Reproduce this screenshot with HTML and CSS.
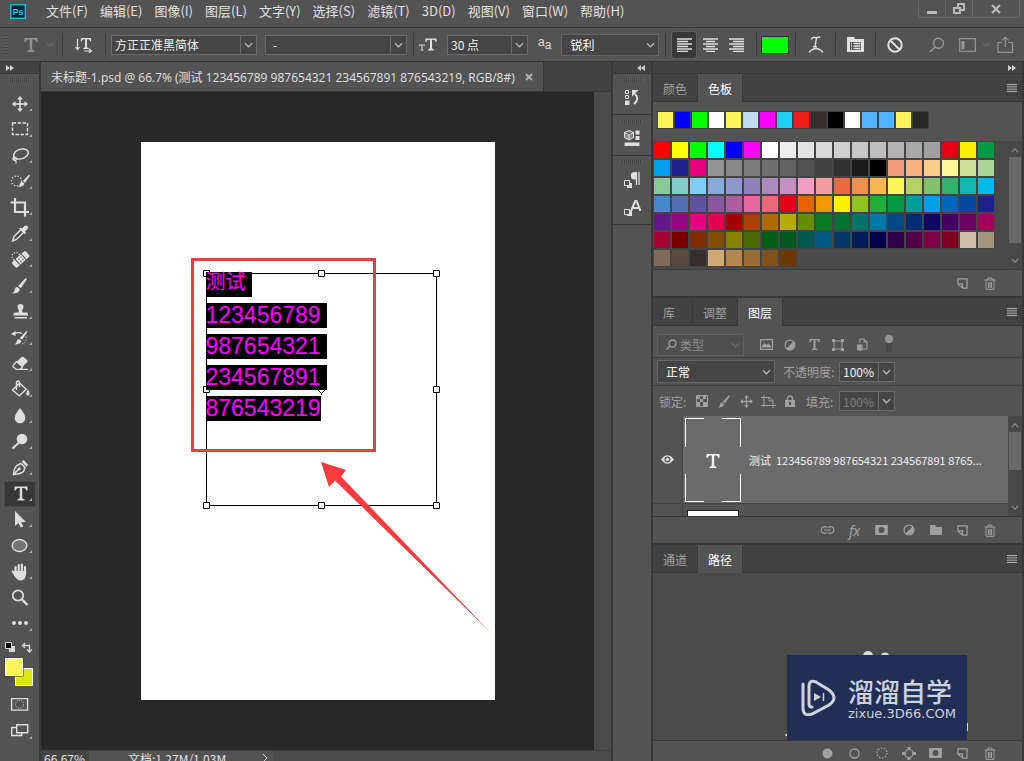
FILE: index.html
```html
<!DOCTYPE html>
<html lang="zh-CN">
<head>
<meta charset="utf-8">
<title>未标题-1.psd</title>
<link rel="stylesheet" href="styles.css">
</head>
<body>
<svg class="sprite" aria-hidden="true">
  <symbol id="chev" viewBox="0 0 10 6"><path d="M1 1l4 4 4-4" fill="none" stroke="currentColor" stroke-width="1.4"/></symbol>
  <symbol id="corner" viewBox="0 0 4 4"><path d="M4 0v4H0z" fill="#a8a8a8"/></symbol>
  <symbol id="new" viewBox="0 0 12 12"><path d="M1 6V1h10v10H6V6.500H1zM1 6.500L6 11" fill="none" stroke="currentColor" stroke-width="1.300"/></symbol>
  <symbol id="trash" viewBox="0 0 12 13"><path d="M.5 3h11M4 3V1h4v2M2 3v9.300h8V3M4.500 5v6M6 5v6M7.500 5v6" fill="none" stroke="currentColor"/></symbol>
  <symbol id="mask" viewBox="0 0 14 11"><path fill-rule="evenodd" d="M0 0h14v11H0zM7 2.300a3.200 3.200 0 100 6.400 3.200 3.200 0 000-6.400z" fill="currentColor"/></symbol>
  <symbol id="half" viewBox="0 0 12 12"><circle cx="6" cy="6" r="4.900" fill="none" stroke="currentColor" stroke-width="1.200"/><path d="M9.500 2.500a5 5 0 01-7 7z" fill="currentColor"/></symbol>
  <symbol id="menu" viewBox="0 0 10 8"><path d="M0 .5h10M0 2.800h10M0 5.200h10M0 7.500h10" stroke="currentColor"/></symbol>
  <symbol id="T" viewBox="0 0 14 14"><path d="M.5 0h13v4H12.300Q12 1.500 10 1.500H8.200V11Q8.200 12.500 10.500 12.700V14h-7v-1.300Q5.800 12.500 5.800 11V1.500H4Q2 1.500 1.700 4H.5z" fill="currentColor"/></symbol>
  <symbol id="move" viewBox="0 0 16 16"><path d="M8 2v12M2 8h12" stroke="currentColor" stroke-width="1.600"/><path d="M8 0l3 3.500H5zM8 16l3-3.500H5zM0 8l3.500-3v6zM16 8l-3.500-3v6z" fill="currentColor"/></symbol>
  <symbol id="brush" viewBox="0 0 14 15"><path d="M13.700.3Q14 1 13.300 2L8.200 9.500 5.800 7.600 12 .8Q13-.2 13.700.3zM5 8.500l2.400 2Q7 14.500 0 14.500 2.500 13 2.600 10.500 3 8.500 5 8.500z" fill="currentColor"/></symbol>
</svg>
<div class="app">
  <header class="menubar">
    <svg class="logo" viewBox="0 0 16 15" role="img" aria-label="Ps"><rect x=".7" y=".7" width="14.600" height="13.600" fill="#032334" stroke="#25b9dc" stroke-width="1.400"/><text x="8" y="11" class="logo-text">Ps</text></svg>
    <nav class="menus">
      <button>文件(F)</button><button>编辑(E)</button><button>图像(I)</button><button>图层(L)</button><button>文字(Y)</button><button>选择(S)</button><button>滤镜(T)</button><button>3D(D)</button><button>视图(V)</button><button>窗口(W)</button><button>帮助(H)</button>
    </nav>
    <div class="window-controls">
      <button aria-label="最小化"><svg width="12" height="12"><path d="M1 9.500h10" stroke="currentColor" stroke-width="3"/></svg></button>
      <button aria-label="还原"><svg width="12" height="12"><path d="M5 5V1h6v6H7M1 5h6v5H1z" fill="none" stroke="currentColor" stroke-width="2"/></svg></button>
      <button class="close" aria-label="关闭"><svg width="12" height="12"><path d="M2 2l8 8M10 2l-8 8" stroke="currentColor" stroke-width="2.200"/></svg></button>
    </div>
  </header>

  <div class="options">
    <div class="group tool-group"><span class="grip-v"></span><svg class="dim" width="14" height="14"><use href="#T"/></svg><svg class="faint" width="8" height="5"><use href="#chev"/></svg></div>
    <div class="group orient-group"><button aria-label="切换文本取向"><svg width="18" height="16"><path d="M2.500 2v10M.5 10l2 2.500 2-2.500M9 14h7M14 12l2.500 2-2.500 2" fill="none" stroke="currentColor" stroke-width="1.200"/><use href="#T" x="5" y="1" width="12" height="11"/></svg></button></div>
    <div class="group font-group">
      <div class="combo family"><input aria-label="字体" value="方正正准黑简体"><button aria-label="选择字体"><svg width="9" height="6"><use href="#chev"/></svg></button></div>
      <div class="combo style"><input aria-label="字体样式" value="-"><button aria-label="选择样式"><svg width="9" height="6"><use href="#chev"/></svg></button></div>
    </div>
    <div class="group size-group">
      <svg width="18" height="16"><use href="#T" x="6" y="1" width="12" height="13"/><use href="#T" x="0" y="7" width="6" height="7"/></svg>
      <div class="combo size"><input aria-label="字号" value="30 点"><button aria-label="选择字号"><svg width="9" height="6"><use href="#chev"/></svg></button></div>
      <span class="aa"><sup>a</sup>a</span>
      <div class="drop smooth"><select aria-label="消除锯齿"><option>锐利</option></select><svg width="9" height="6"><use href="#chev"/></svg></div>
    </div>
    <div class="group align-group">
      <button class="on" aria-label="左对齐"><svg width="15" height="14"><path d="M0 1h15M0 3.500h11M0 6h15M0 8.500h11M0 11h15M0 13.500h11" stroke="currentColor" stroke-width="1.400"/></svg></button>
      <button aria-label="居中对齐"><svg width="15" height="14"><path d="M0 1h15M3 3.500h9M0 6h15M3 8.500h9M0 11h15M3 13.500h9" stroke="currentColor" stroke-width="1.400"/></svg></button>
      <button aria-label="右对齐"><svg width="15" height="14"><path d="M0 1h15M4 3.500h11M0 6h15M4 8.500h11M0 11h15M4 13.500h11" stroke="currentColor" stroke-width="1.400"/></svg></button>
    </div>
    <div class="group color-group"><button class="text-color" aria-label="文本颜色"></button></div>
    <div class="group icon-group"><button aria-label="文字变形"><svg width="16" height="18"><path d="M3.500 3.500Q4 1 6 1.500t6-.5M8.500 2L7 10.500M5 10.800h4M1 16.500q7-8 14 0" fill="none" stroke="currentColor" stroke-width="1.400"/></svg></button></div>
    <div class="group icon-group"><button aria-label="字符面板"><svg width="17" height="17"><path fill-rule="evenodd" d="M0 1h7l1 2h9v13H0zM3 6v8h11V6z" fill="currentColor"/><path d="M4 7.500h1M6.500 7.500h7M4 10h1M6.500 10h7M4 12.500h1M6.500 12.500h7" stroke="currentColor" stroke-width="1.300"/></svg></button></div>
    <div class="tail">
      <button aria-label="取消"><svg width="16" height="16"><path d="M3 3l10 10M8 1.300a6.700 6.700 0 100 13.400A6.700 6.700 0 008 1.300z" fill="none" stroke="currentColor" stroke-width="2"/></svg></button>
      <button class="dim push" aria-label="搜索"><svg width="16" height="16"><circle cx="9.500" cy="6.300" r="5" fill="none" stroke="currentColor" stroke-width="1.500"/><path d="M6 10l-5 5" stroke="currentColor" stroke-width="1.700"/></svg></button>
      <button class="dim" aria-label="工作区"><svg width="17" height="14"><path d="M.7.7h15.600v12.600H.7z" fill="none" stroke="currentColor" stroke-width="1.300"/><path d="M2.500 3v8h3V3z" fill="currentColor"/></svg></button>
      <svg class="faint" width="8" height="5"><use href="#chev"/></svg>
      <button class="dim" aria-label="共享"><svg width="17" height="17"><path d="M5 6.500H1v9.800h14.500V6.500h-4M8.300 11V1M5 4.300L8.300 1l3.300 3.300" fill="none" stroke="currentColor" stroke-width="1.200"/></svg></button>
    </div>
  </div>

  <div class="workspace">
    <aside class="toolbar">
      <div class="strip"><svg width="8" height="6"><path d="M0 0l4 3-4 3zM4 0l4 3-4 3z" fill="#d0d0d0"/></svg></div>
      <div class="grip"></div>
      <div class="tools" id="tools">
        <button aria-label="移动"><svg><use href="#move" x="8" y="5" width="16" height="16"/></svg></button>
        <button aria-label="矩形选框"><svg><path d="M8.500 6h15v11.500h-15z" fill="none" stroke="currentColor" stroke-width="1.400" stroke-dasharray="3.500 1.500"/></svg></button>
        <button aria-label="套索"><svg><ellipse cx="17" cy="11" rx="7.500" ry="4.800" transform="rotate(-16 17 11)" fill="none" stroke="currentColor" stroke-width="1.500"/><path d="M10 14a1.800 1.800 0 102.500 1.500Q11 13.500 9.500 16q3 1 2.500 4.500" fill="none" stroke="currentColor" stroke-width="1.200"/></svg></button>
        <button aria-label="快速选择"><svg><circle cx="12.500" cy="12" r="5" fill="none" stroke="currentColor" stroke-width="1.300" stroke-dasharray="1.300 1.700"/><use href="#brush" x="14" y="5" width="12" height="14"/></svg></button>
        <button aria-label="裁剪"><svg><path d="M6.500 8.500h14.500v14M11 4v14h14" transform="translate(0 -1)" fill="none" stroke="currentColor" stroke-width="2.200"/></svg></button>
        <button aria-label="吸管"><svg><path d="M17 8.500l-7 7-1.500 4.500 4-1.500 7-7" fill="none" stroke="currentColor" stroke-width="1.400"/><path d="M15 7.500l1.700-1L18 7.500l2.500-2.500q2-1 3 0t0 3L21 10.500l1 1.300-1.500 1.500z" fill="currentColor"/></svg></button>
        <button aria-label="修复画笔"><svg><circle cx="12" cy="9.500" r="4" fill="none" stroke="currentColor" stroke-width="1.200" stroke-dasharray="1.200 1.500"/><g transform="rotate(-42 16.500 12.500)"><rect x="7.500" y="8.800" width="18.500" height="7.500" rx="2" fill="currentColor"/><path d="M12.700 8.500v8M20.700 8.500v8" stroke="#535353"/><path d="M15 11.300h1M18 11.300h1M15 14h1M18 14h1" stroke="#535353" stroke-width="1.400"/></g></svg></button>
        <button aria-label="画笔"><svg><use href="#brush" x="8" y="5" width="15" height="16"/></svg></button>
        <button aria-label="仿制图章"><svg><path d="M16.500 5a3 3 0 013 3q0 1.500-1.200 3v2.500h4.200q1.500 0 1.500 2v1H9.500v-1q0-2 1.500-2h3.700V11q-1.200-1.500-1.200-3a3 3 0 013-3zM10.500 18h12.500v1.600H10.500z" fill="currentColor"/></svg></button>
        <button aria-label="历史记录画笔"><svg><use href="#brush" x="10" y="6" width="14" height="14"/><path d="M10 8.300q6-1.600 8 .2" fill="none" stroke="currentColor" stroke-width="1.300"/><path d="M7 9l4.500-3v5z" fill="currentColor"/><path d="M22 11.500q1.500 6-4.500 7.500" fill="none" stroke="currentColor" stroke-dasharray="1.200 1.500"/></svg></button>
        <button aria-label="橡皮擦"><svg><path d="M9.300 14.200L17.500 6q1-.8 2 0l3.800 3.300q.8 1 0 1.800l-4.800 4.700-6-5.300z" fill="currentColor"/><path d="M12.500 10.500l6 5.300-2.300 2.600h-4L9.300 16q-.8-1 0-1.800zM12 18.400h12" fill="none" stroke="currentColor" stroke-width="1.300"/></svg></button>
        <button aria-label="油漆桶"><svg><path d="M8.500 13l7-7 6.700 6.300-7 6.500zM12.500 13V6q0-2 1.500-2t1.500 2v4" fill="none" stroke="currentColor" stroke-width="1.400"/><path d="M24 12.500q2.500 4 1 5.500t-2.300 0q-1.300-1.500 1.300-5.500z" fill="currentColor"/></svg></button>
        <button aria-label="模糊"><svg><path d="M16 5q5.300 6.500 5.300 10a5.300 5.300 0 01-10.600 0Q10.700 11.500 16 5z" fill="currentColor"/></svg></button>
        <button aria-label="减淡"><svg><circle cx="18" cy="10" r="5.300" fill="currentColor"/><path d="M14.500 14L8.500 19.500" stroke="currentColor" stroke-width="2.200"/></svg></button>
        <button aria-label="钢笔"><svg><path d="M9.500 19.500Q10 13 13 10.500l4-2 4 4-1.500 4Q17 19 9.500 19.500zM9.500 19.500l5-5" fill="none" stroke="currentColor" stroke-width="1.500"/><circle cx="15.200" cy="13.800" r="1.500" fill="currentColor"/><path d="M17.500 6.500l2-1.500 4.700 4.700-1.700 2z" fill="currentColor"/></svg></button>
        <button class="on" aria-label="横排文字"><svg><use href="#T" x="10" y="5" width="14" height="15"/></svg></button>
        <button aria-label="路径选择"><svg><path d="M11 4v15l3.500-3 2.200 4.600 2.600-1.200L17.300 15h4.700z" fill="currentColor"/></svg></button>
        <button aria-label="椭圆"><svg><ellipse cx="15.500" cy="12.500" rx="7.300" ry="6" fill="#747474" stroke="currentColor" stroke-width="1.400"/></svg></button>
        <button aria-label="抓手"><svg><path d="M11.500 8v5.500M14.700 6v7M17.900 5.500V13M21 8v6.500M8.800 12.500l3 4" stroke="currentColor" stroke-width="2.200" stroke-linecap="round"/><path d="M10.500 12h11.600v3.500q-1 6-5.500 6-3.500 0-6.600-5z" fill="currentColor"/></svg></button>
        <button aria-label="缩放"><svg><circle cx="14" cy="10.500" r="5.200" fill="none" stroke="currentColor" stroke-width="1.700"/><path d="M18 14.500l5.500 5.500" stroke="currentColor" stroke-width="2.400"/></svg></button>
        <button aria-label="更多工具"><svg><circle cx="10" cy="12" r="2" fill="currentColor"/><circle cx="16" cy="12" r="2" fill="currentColor"/><circle cx="22" cy="12" r="2" fill="currentColor"/></svg></button>
      </div>
      <div class="colors">
        <svg width="32" height="50" viewBox="0 0 32 50">
          <path d="M5 5h6v6H5z" fill="#d8d8d8"/><path d="M1.500 1.500h6v6h-6z" fill="#000" stroke="#d8d8d8"/>
          <path d="M20 4.500h5.500V10M21 2l-2.500 2.500L21 7M23 8.500l2.500 2.500L28 8.500" fill="none" stroke="#d8d8d8" stroke-width="1.300"/>
          <path d="M11.500 27.500h17v17h-17z" fill="#dde600" stroke="#fff"/>
          <path d="M.5 16.500h19v19H.5z" fill="#383838"/><path d="M1.500 17.500h17v17h-17z" fill="#fff45c" stroke="#fff"/>
        </svg>
      </div>
      <div class="tools modes">
        <button aria-label="快速蒙版"><svg><path d="M7.600 7.600h16v11.500h-16z" fill="none" stroke="currentColor" stroke-width="1.400"/><circle cx="15.600" cy="13.300" r="4" fill="none" stroke="currentColor" stroke-dasharray="1 1.200"/></svg></button>
        <button aria-label="屏幕模式"><svg><path d="M12 10.500H7.700v8h10v-3M12.700 7.700h11v8h-11z" fill="none" stroke="currentColor" stroke-width="1.400"/><use href="#corner" x="25" y="19" width="3" height="3"/></svg></button>
      </div>
    </aside>

    <main class="document">
      <div class="doc-tabs"><div class="doc-tab"><span>未标题-1.psd @ 66.7% (测试 123456789 987654321 234567891 876543219, RGB/8#)</span><button aria-label="关闭文档"><svg width="8" height="8"><path d="M1 1l6 6M7 1L1 7" stroke="currentColor" stroke-width="2"/></svg></button></div></div>
      <div class="viewport">
        <div class="stage">
          <div class="artboard">
            <svg class="text-frame" viewBox="0 0 239 241">
              <path d="M4.500 4.500h230v232H4.500z" fill="none" stroke="#000"/>
              <path d="M119.500 115v11" stroke="#000"/>
              <g fill="#fff" stroke="#000"><path d="M1.500 1.500h6v6h-6zM116.500 1.500h6v6h-6zM231.500 1.500h6v6h-6zM1.500 117.500h6v6h-6zM231.500 117.500h6v6h-6zM1.500 233.500h6v6h-6zM116.500 233.500h6v6h-6zM231.500 233.500h6v6h-6zM119.500 116.500l4 4-4 4-4-4z"/></g>
            </svg>
            <div class="type"><p class="cjk">测试 </p><p>123456789 </p><p>987654321 </p><p>234567891 </p><p>876543219</p></div>
            <div class="highlight"></div>
            <svg class="arrow" viewBox="0 0 170 171"><path d="M0 0l25 8-5 6.500L169 170 14 18.500 8 25z" fill="#f93b3b"/></svg>
          </div>
        </div>
        <div class="v-scroll"></div>
      </div>
      <footer class="status"><span class="zoom">66.67%</span><span class="doc-size">文档:1.27M/1.03M</span><svg width="6" height="10"><path d="M1 1l4 4-4 4" fill="none" stroke="#ccc"/></svg><span class="h-scroll"></span></footer>
    </main>

    <aside class="dock">
      <div class="strip end"><svg width="8" height="6"><path d="M4 0L0 3l4 3zM8 0L4 3l4 3z" fill="#d0d0d0"/></svg></div>
      <div class="dock-body">
        <div class="dock-group"><div class="grip"></div><button aria-label="历史记录"><svg width="18" height="18"><path d="M2.500 1.500h3v3h-3zM2.500 6.500h3v3h-3z" fill="none" stroke="currentColor"/><path d="M2 11.500h4.500V16H2z" fill="currentColor"/><path d="M11 15q6-5 1-10" fill="none" stroke="currentColor" stroke-width="2"/><path d="M9 1h6.500L9 7.500z" fill="currentColor"/></svg></button></div>
        <div class="dock-group"><div class="grip"></div><button aria-label="3D"><svg width="18" height="18"><path d="M6 .5l4.500 2v5L6 10 1.500 7.500v-5zM1.500 2.500L6 5l4.500-2.500M6 5v5" fill="#8a8a8a" stroke="currentColor"/><path d="M12.500.500h4v4h-4zM12.500 6h4v4h-4zM1.500 12.500h15V16h-15z" fill="currentColor"/></svg></button></div>
        <div class="dock-group tall"><div class="grip"></div><button aria-label="段落"><svg width="18" height="18"><path d="M13.500 1v13M16 1v13" stroke="currentColor" stroke-width="1.300"/><path d="M17 1h-5.500a3.700 3.700 0 000 7.400H13V1z" fill="currentColor"/><path d="M4 12h5v5H4z" fill="currentColor"/><path d="M1.500 9.500h5v5h-5z" fill="#535353" stroke="currentColor"/></svg></button><button aria-label="字符"><svg width="18" height="18"><path d="M8 12l4.300-10h1.300L17.500 12M9.500 9h7" fill="none" stroke="currentColor" stroke-width="2"/><path d="M4 12h5v5H4z" fill="currentColor"/><path d="M1.500 10.500h5v5h-5z" fill="#535353" stroke="currentColor"/></svg></button></div>
      </div>
    </aside>

    <aside class="panels">
      <div class="strip end"><svg width="8" height="6"><path d="M0 0l4 3-4 3zM4 0l4 3-4 3z" fill="#d0d0d0"/></svg></div>
      <section class="panel">
        <div class="tabs"><button>颜色</button><button class="on">色板</button><button class="panel-menu" aria-label="面板菜单"><svg width="10" height="8"><use href="#menu"/></svg></button></div>
        <div class="recent" id="recent"></div>
        <div class="swatch-area"><div class="swatches" id="swatches"></div><div class="scroll"><svg width="8" height="5" class="up"><use href="#chev"/></svg><span class="thumb swatch-thumb"></span><svg width="8" height="5"><use href="#chev"/></svg></div></div>
        <div class="panel-foot"><button aria-label="新建色板"><svg width="11" height="11"><use href="#new"/></svg></button><button aria-label="删除色板"><svg width="12" height="13"><use href="#trash"/></svg></button></div>
      </section>

      <section class="panel">
        <div class="tabs"><button>库</button><button>调整</button><button class="on">图层</button><button class="panel-menu" aria-label="面板菜单"><svg width="10" height="8"><use href="#menu"/></svg></button></div>
        <div class="row filter-row">
          <div class="drop kind"><svg class="lens" width="11" height="11"><circle cx="6.500" cy="4.500" r="3.500" fill="none" stroke="currentColor" stroke-width="1.300"/><path d="M4 7l-3.500 3.500" stroke="currentColor" stroke-width="1.500"/></svg><select aria-label="过滤类型"><option>类型</option></select><svg class="faint" width="9" height="6"><use href="#chev"/></svg></div>
          <div class="filter-icons">
            <button aria-label="像素图层"><svg width="13" height="11"><path d="M.6.600h11.800v9.800H.6z" fill="none" stroke="currentColor" stroke-width="1.200"/><path d="M2 8.500V7l2.500-3 2 2L8 4.500 11 7v1.500z" fill="currentColor"/></svg></button>
            <button aria-label="调整图层"><svg width="12" height="12"><use href="#half"/></svg></button>
            <button aria-label="文字图层"><svg width="11" height="11"><use href="#T"/></svg></button>
            <button aria-label="形状图层"><svg width="12" height="12"><path d="M2 2h8v8H2z" fill="none" stroke="currentColor"/><path d="M0 0h3v3H0zM9 0h3v3H9zM0 9h3v3H0zM9 9h3v3H9z" fill="currentColor"/></svg></button>
            <button aria-label="智能对象"><svg width="12" height="13"><path d="M4 5V1h4l3 3v7H6M8 1v3h3" fill="none" stroke="currentColor" stroke-width="1.200"/><path d="M1 6.500h5.500v6H1z" fill="currentColor"/></svg></button>
            <button class="toggle" aria-label="图层过滤开关"><svg width="10" height="22"><path d="M2 7h6v8q0 3-3 3t-3-3z" fill="#484848"/><circle cx="5" cy="5" r="4.200" fill="#929292"/></svg></button>
          </div>
        </div>
        <div class="row blend-row">
          <div class="drop blend"><select aria-label="混合模式"><option>正常</option></select><svg width="9" height="6"><use href="#chev"/></svg></div>
          <label for="opacity">不透明度:</label>
          <div class="combo percent"><input id="opacity" value="100%"><button aria-label="不透明度滑块"><svg width="9" height="6"><use href="#chev"/></svg></button></div>
        </div>
        <div class="row lock-row">
          <span class="lock-label">锁定:</span>
          <div class="locks">
            <button aria-label="锁定透明像素"><svg width="12" height="12"><path d="M.5.500h11v11H.5z" fill="none" stroke="currentColor"/><path d="M1 1h3v3H1zM7 1h3v3H7zM4 4h3v3H4zM1 7h3v4H1zM7 7h4v4H7z" fill="currentColor"/></svg></button>
            <button aria-label="锁定图像像素"><svg width="12" height="13"><use href="#brush"/></svg></button>
            <button aria-label="锁定位置"><svg width="13" height="13"><use href="#move"/></svg></button>
            <button aria-label="防止自动嵌套"><svg width="15" height="13"><path d="M3 0v12M0 2.500h9l3 3V13M0 10.500h15M8 2.500V6h4" fill="none" stroke="currentColor"/></svg></button>
            <button aria-label="全部锁定"><svg width="10" height="12"><path d="M2.500 5V3.500a2.500 2.500 0 015 0V5" fill="none" stroke="currentColor" stroke-width="1.400"/><path fill-rule="evenodd" d="M0 5h10v7H0zM4 7v3h2V7z" fill="currentColor"/></svg></button>
          </div>
          <label for="fill">填充:</label>
          <div class="combo percent off"><input id="fill" value="100%"><button aria-label="填充滑块"><svg width="9" height="6"><use href="#chev"/></svg></button></div>
        </div>
        <div class="layers">
          <div class="layer-list">
            <div class="layer"><button class="eye" aria-label="可见性"><svg width="13" height="9"><path fill-rule="evenodd" d="M0 4.500Q6.500-4 13 4.500 6.500 13 0 4.500zM6.500 1.500a3 3 0 100 6 3 3 0 000-6z" fill="currentColor"/><circle cx="6.500" cy="4.500" r="1.700" fill="currentColor"/></svg></button>
              <div class="layer-main"><svg class="thumb-text" width="56" height="84"><path d="M.5 29V.500H19M37 .500h18.500V29M.5 56v27.500H19M37 83.500h18.500V56" fill="none" stroke="#fff"/><use href="#T" x="21" y="36" width="14" height="14"/></svg><span class="layer-name">测试&nbsp; 123456789 987654321 234567891 8765...</span></div></div>
            <div class="layer next"><span class="eye"></span><div class="layer-main"><span class="thumb-blank"></span></div></div>
          </div>
          <div class="scroll"><svg width="8" height="5" class="up"><use href="#chev"/></svg><span class="thumb layer-thumb"></span><svg width="8" height="5"><use href="#chev"/></svg></div>
        </div>
        <div class="panel-foot">
          <button aria-label="链接图层"><svg width="15" height="8"><path d="M7 6.500Q5 8 3 7a3.300 3.300 0 010-6q2-1 4 .5M8 1.500q2-1.500 4-.5a3.300 3.300 0 010 6q-2 1-4-.5M4 4h7" fill="none" stroke="currentColor" stroke-width="1.200"/></svg></button>
          <button class="fx" aria-label="图层样式">fx</button>
          <button aria-label="添加蒙版"><svg width="13" height="10"><use href="#mask"/></svg></button>
          <button aria-label="调整图层"><svg width="12" height="12"><use href="#half"/></svg></button>
          <button aria-label="新建组"><svg width="12" height="10"><path d="M0 0h5l1 2h6v8H0z" fill="currentColor"/></svg></button>
          <button aria-label="新建图层"><svg width="11" height="11"><use href="#new"/></svg></button>
          <button aria-label="删除图层"><svg width="12" height="13"><use href="#trash"/></svg></button>
        </div>
      </section>

      <section class="panel paths">
        <div class="tabs"><button>通道</button><button class="on">路径</button><button class="panel-menu" aria-label="面板菜单"><svg width="10" height="8"><use href="#menu"/></svg></button></div>
        <div class="path-body">
          <div class="brand">
            <svg class="specks" viewBox="0 0 184 90"><circle cx="83" cy="6" r="5" fill="#ddd"/><circle cx="100" cy="7" r="4.500" fill="#ddd"/><circle cx="1.500" cy="85" r="1.200" fill="#eee"/><path d="M182.500 73v8" stroke="#ddd"/></svg>
            <div class="brand-box">
              <svg width="35" height="37" viewBox="0 0 35 37"><path d="M2 5v24q0 9 9 6l17-9q10-7 0-15L15 3Q8 0 8 8v17q0 3 3 3" fill="none" stroke="#cdd2dd" stroke-width="3" stroke-linecap="round"/><path d="M13 14l7 4-7 4z" fill="#cdd2dd"/><path d="M22.500 14v8" stroke="#cdd2dd" stroke-width="1.500"/></svg>
              <div><div class="brand-name">溜溜自学</div><div class="brand-url">zixue.3D66.COM</div></div>
            </div>
          </div>
        </div>
        <div class="panel-foot">
          <button aria-label="填充路径"><svg width="11" height="11"><circle cx="5.500" cy="5.500" r="5" fill="currentColor"/></svg></button>
          <button aria-label="描边路径"><svg width="11" height="11"><circle cx="5.500" cy="5.500" r="4.500" fill="none" stroke="currentColor" stroke-width="1.300"/></svg></button>
          <button aria-label="载入选区"><svg width="12" height="12"><circle cx="6" cy="6" r="5" fill="none" stroke="currentColor" stroke-width="1.400" stroke-dasharray="1.400 1.700"/></svg></button>
          <button aria-label="生成路径"><svg width="14" height="13"><circle cx="7" cy="6.500" r="4" fill="none" stroke="currentColor" stroke-width="1.200"/><path d="M5.500 0h3v3h-3zM5.500 10h3v3h-3zM0 5h3.500v3H0zM10.500 5H14v3h-3.500z" fill="currentColor"/></svg></button>
          <button aria-label="添加蒙版"><svg width="13" height="10"><use href="#mask"/></svg></button>
          <button aria-label="新建路径"><svg width="11" height="11"><use href="#new"/></svg></button>
          <button aria-label="删除路径"><svg width="12" height="13"><use href="#trash"/></svg></button>
        </div>
      </section>
    </aside>
  </div>
</div>
<script src="script.js"></script>
</body>
</html>
```
FILE: styles.css
```css
* { box-sizing: border-box; }
body { margin: 0; }
body, button, input, select { font-family: "Noto Sans CJK SC", "Noto Sans", sans-serif; font-size: 12px; }
button { background: none; border: 0; padding: 0; color: inherit; display: flex; align-items: center; justify-content: center; }
svg { display: block; flex: none; }
p { margin: 0; }
.sprite { position: absolute; width: 0; height: 0; }
.app { height: 100vh; display: flex; flex-direction: column; overflow: hidden; background: #535353; color: #e0e0e0; }

.menubar { display: flex; height: 28px; flex: none; border-bottom: 1px solid #3a3a3a; padding: 0 4px 0 10px; align-items: flex-start; }
.logo { width: 16px; height: 15px; margin-top: 4px; }
.logo-text { font: 700 9px "Liberation Sans", sans-serif; fill: #2ec4e8; text-anchor: middle; }
.menus { display: flex; padding-left: 14px; }
.menus button { font-size: 13px; line-height: 20px; padding: 1px 6px 0; white-space: nowrap; }
.window-controls { display: flex; margin-left: auto; border: 1px solid #666; border-top: 0; border-radius: 0 0 3px 3px; color: #b8b8b8; }
.window-controls button { width: 27px; height: 17px; border-right: 1px solid #666; }
.window-controls .close { width: 46px; border-right: 0; }

.options { display: flex; height: 34px; flex: none; border-bottom: 1px solid #383838; align-items: center; }
.group { display: flex; align-items: center; height: 24px; border-right: 1px solid #3c3c3c; }
.group button { height: 26px; }
.grip-v { width: 5px; height: 20px; margin: 0 8px 0 3px; background: repeating-linear-gradient(#454545 0 1px, #5a5a5a 1px 3px); }
.dim { color: #929292; }
.faint { color: #686868; }
.tool-group { width: 63px; gap: 8px; }
.orient-group { width: 43px; justify-content: center; }
.font-group { padding: 0 6px 0 5px; gap: 8px; }
.size-group { padding: 0 6px 0 5px; gap: 10px; }
.combo { display: flex; height: 20px; border: 1px solid #6a6a6a; background: #454545; }
.combo input { min-width: 0; flex: 1; border: 0; background: none; color: #f0f0f0; padding: 0 0 0 3px; outline: 0; }
.combo button { width: 16px; height: auto; border-left: 1px solid #6a6a6a; color: #b8b8b8; }
.family { width: 146px; }
.style { width: 142px; }
.style input { padding-left: 7px; }
.size { width: 81px; }
.aa { font: 12px/16px "Liberation Sans", sans-serif; color: #dcdcdc; }
.aa sup { font-size: 12px; line-height: 0; vertical-align: 3px; }
.drop { display: grid; align-items: center; background: #454545; border: 1px solid #666; color: #b8b8b8; }
.drop select { grid-area: 1 / 1; height: 100%; width: 100%; appearance: none; background: none; border: 0; color: #fff; padding: 0 0 0 8px; outline: 0; }
.drop svg { grid-area: 1 / 1; justify-self: end; margin-right: 3px; pointer-events: none; }
.smooth { width: 98px; height: 22px; }
.align-group { padding: 0 8px 0 6px; gap: 2px; }
.align-group button { width: 24px; border-radius: 2px; }
.align-group .on { background: #383838; box-shadow: 0 0 0 1px #606060; }
.color-group { width: 39px; padding-left: 4px; }
.group .text-color { width: 28px; height: 18px; background: #0f0; border: 1px solid #2c2c2c; }
.icon-group { width: 40px; justify-content: center; }
.tail { display: flex; flex: 1; align-items: center; padding: 0 4px; }
.tail button { width: 30px; height: 26px; }
.tail .push { margin-left: auto; }

.workspace { display: flex; flex: 1; min-height: 0; }
.strip { height: 12px; flex: none; background: #424242; border-bottom: 1px solid #383838; display: flex; align-items: center; padding: 0 6px; }
.strip.end { justify-content: flex-end; }
.grip { width: 20px; height: 4px; margin: 4px auto 0; background: repeating-linear-gradient(90deg, #424242 0 1px, #5c5c5c 1px 2px); flex: none; }

.toolbar { width: 41px; flex: none; border-right: 2px solid #383838; display: flex; flex-direction: column; }
.tools { display: flex; flex-direction: column; padding: 9px 0 0 4px; align-items: flex-start; color: #dedede; }
.tools button { width: 32px; height: 26px; flex: none; }
.tools svg { width: 32px; height: 26px; }
.tools .on { background: #383838; box-shadow: inset 0 0 0 1px #484848; border-radius: 2px; }
.colors { padding: 4px 0 0 4px; }
.modes { padding-top: 0; }

.document { flex: 1; min-width: 0; display: flex; flex-direction: column; background: #424242; }
.doc-tabs { height: 30px; flex: none; display: flex; border-bottom: 1px solid #383838; }
.doc-tab { display: flex; align-items: center; gap: 10px; padding: 0 10px; background: #535353; border-right: 1px solid #383838; white-space: nowrap; font-family: "Open Sans", "Noto Sans CJK SC", sans-serif; }
.doc-tab button { color: #b0b0b0; }
.viewport { flex: 1; min-height: 0; display: flex; }
.stage { flex: 1; background: #282828; display: flex; align-items: center; justify-content: center; overflow: hidden; }
.v-scroll { width: 17px; background: #4b4b4b; }
.artboard { width: 354px; height: 558px; flex: none; background: #fff; position: relative; }
.text-frame { position: absolute; left: 61px; top: 127px; width: 239px; height: 241px; }
.type { position: absolute; left: 65px; top: 130px; display: flex; flex-direction: column; align-items: flex-start; gap: 6px; }
.type p { background: #000; color: #f0f; font: 23px/25px "Liberation Sans", sans-serif; white-space: pre; }
.type .cjk { font-family: "Liberation Sans", "Noto Sans CJK SC", sans-serif; font-size: 20px; line-height: 20px; height: 25px; padding-right: 1px; }
.highlight { position: absolute; left: 50px; top: 116px; width: 185px; height: 194px; border: 3px solid #e8403f; }
.arrow { position: absolute; left: 180px; top: 320px; width: 170px; height: 171px; }
.status { display: flex; height: 11px; flex: none; overflow: hidden; background: #535353; border-top: 1px solid #404040; line-height: 15px; align-items: flex-start; }
.zoom { width: 48px; padding-left: 3px; background: #454545; }
.doc-size { padding-left: 39px; width: 173px; }
.status svg { margin-top: 2px; }
.h-scroll { flex: 1; margin-left: 5px; height: 15px; background: #4b4b4b; }

.dock { width: 42px; flex: none; display: flex; flex-direction: column; border-left: 2px solid #383838; border-right: 2px solid #383838; background: #535353; }
.dock-group { height: 41px; border-bottom: 1px solid #383838; display: flex; flex-direction: column; align-items: center; }
.dock-group button { height: 28px; color: #dedede; }
.dock-group .grip + button { margin-top: 2px; }
.dock-group.tall { height: 69px; }

.panels { width: 371px; flex: none; display: flex; flex-direction: column; border-right: 2px solid #383838; }
.panel { border-bottom: 2px solid #383838; }
.tabs { display: flex; height: 28px; background: #424242; border-bottom: 1px solid #383838; color: #a0a0a0; }
.tabs button { padding: 0 10px; border-right: 1px solid #383838; height: 28px; min-width: 40px; justify-content: flex-start; }
.tabs .on { background: #535353; color: #fff; }
.tabs .panel-menu { margin-left: auto; min-width: 0; padding: 0 5px; border: 0; color: #b4b4b4; }
.recent { display: flex; gap: 2px; margin: 9px 0 12px 4px; padding: 1px; background: #424242; width: max-content; }
.recent button { width: 15px; height: 16px; }
.swatch-area { display: flex; justify-content: space-between; background: #4a4a4a; height: 129px; border-bottom: 1px solid #3c3c3c; }
.swatches { display: grid; grid-template-columns: repeat(19, 16px); grid-auto-rows: 16px; gap: 2px; padding: 1px; align-content: start; }
.swatches button { box-shadow: 0 0 0 1px #444; }
.scroll { width: 14px; display: flex; flex-direction: column; align-items: center; padding: 7px 1px 6px; background: #484848; color: #909090; }
.scroll svg:last-child { margin-top: auto; }
.up { transform: rotate(180deg); }
.thumb { width: 12px; background: #686868; margin-top: 4px; }
.swatch-thumb { height: 86px; }
.layer-thumb { height: 38px; }
.panel-foot { display: flex; justify-content: flex-end; height: 26px; padding-right: 19px; color: #a0a0a0; }
.panel-foot button { width: 27px; }
.fx { font: italic 14px "Noto Sans", sans-serif; }

.row { display: flex; align-items: center; border-bottom: 1px solid #404040; }
.filter-row { height: 32px; padding: 6px 0 0 4px; color: #a0a0a0; }
.drop.kind { width: 87px; height: 22px; background: #4f4f4f; border-color: #606060; color: #a0a0a0; }
.drop .lens { justify-self: start; margin-left: 8px; }
.kind select { color: #8c8c8c; padding-left: 22px; }
.filter-icons { display: flex; padding-left: 10px; }
.filter-icons button { width: 24px; height: 22px; }
.filter-icons .toggle { width: 30px; }
.blend-row { height: 28px; padding-left: 4px; color: #a0a0a0; }
.blend { width: 118px; height: 23px; }
.blend-row label { width: 56px; margin-left: 8px; }
.percent { width: 56px; }
.percent.off input { color: #7c7c7c; }
.lock-row { height: 30px; padding-left: 6px; color: #a0a0a0; border-bottom: 0; }
.lock-label { width: 32px; }
.locks { display: flex; }
.locks button { width: 22px; height: 22px; }
.lock-row label { width: 33px; margin-left: 5px; }
.layers { display: flex; height: 101px; border-bottom: 1px solid #383838; }
.layer-list { flex: 1; min-width: 0; overflow: hidden; }
.layer { display: flex; height: 88px; border-bottom: 1px solid #424242; }
.eye { width: 30px; flex: none; border-right: 1px solid #424242; }
.layer-main { flex: 1; min-width: 0; display: flex; align-items: center; background: #6b6b6b; padding-left: 2px; gap: 8px; color: #f0f0f0; }
.layer-name { font-size: 11px; white-space: nowrap; }
.next .layer-main { background: #535353; align-items: flex-start; padding: 6px 0 0 4px; }
.thumb-blank { width: 52px; height: 40px; background: #fff; border: 1px solid #222; }
.paths { flex: 1; min-height: 0; display: flex; flex-direction: column; border-bottom: 0; }
.paths .tabs { flex: none; }
.path-body { flex: 1; background: #4b4b4b; border-bottom: 1px solid #383838; position: relative; }
.paths .panel-foot { height: 20px; padding-top: 4px; flex: none; }
.brand { position: absolute; right: 55px; bottom: 0; width: 180px; height: 85px; }
.specks { position: absolute; right: -2px; bottom: 0; width: 184px; height: 90px; }
.brand-box { position: relative; height: 100%; background: #212f57; display: flex; align-items: center; padding-left: 14px; gap: 12px; color: #cdd2dd; }
.brand-name { font-size: 26px; line-height: 32px; font-weight: 500; }
.brand-url { font: 13px/14px "DejaVu Sans", sans-serif; }
```
FILE: script.js
```js
const recent = "fff45c 0000ff 00ff00 ffffff fff45c c0dcf5 ff00ff 1fd0f0 ee1c14 362e2b 000000 ffffff 50b4ff 50b4ff fff45c 282828";
const palette = [
  "ff0000 ffff00 00ff00 00ffff 0000ff ff00ff ffffff ececec e3e3e3 dadada d0d0d0 c8c8c8 bebebe b2b2b2 a9a9a9 a0a0a0 e60012 fff100 009944",
  "00a0e9 1d2088 e4007f 959595 898989 7d7d7d 707070 626262 535353 424242 303030 1a1a1a 000000 f19b76 f6b37f facd89 fff799 cce198 acd598",
  "89c997 84ccc9 7ecef4 88abda 8c97cb 8f82bc aa89bd c490bf f19ec2 f29c9f ec6941 f19149 f8b551 fff45c b3d465 80c269 32b16c 13b5b1 00b7ee",
  "448aca 556fb5 5f52a0 8957a1 ae5da1 ea68a2 eb6877 e60012 eb6100 f39800 fff100 8fc31f 22ac38 009944 009e96 00a0e9 0068b7 00479d 1d2088",
  "601986 920783 e4007f e5004f a40000 a84200 ac6a00 b7aa00 638c0b 097c25 007130 00736d 0075a9 004986 002e73 100964 440062 6a005f a4005b",
  "a40035 7d0000 7f2d00 834e00 8a8000 486a00 005e15 00561f 005752 005982 003567 001c58 03004c 31004a 500047 7e0043 7d0022 d0bda5 a6937c",
  "7f6b5a 59493f 362e2b cfa972 b28850 996c33 81511c 6a3906"
].join(" ");

function fill(id, colors) {
  const box = document.getElementById(id);
  for (const c of colors.split(" ")) {
    const b = document.createElement("button");
    b.style.background = "#" + c;
    b.setAttribute("aria-label", "#" + c);
    box.append(b);
  }
}
fill("recent", recent);
fill("swatches", palette);

// Every tool except zoom has a flyout, marked by a small corner triangle.
for (const svg of document.querySelectorAll("#tools svg")) {
  if (svg.parentNode.getAttribute("aria-label") === "缩放") continue;
  const use = document.createElementNS("http://www.w3.org/2000/svg", "use");
  for (const [k, v] of Object.entries({ href: "#corner", x: 25, y: 17, width: 3, height: 3 })) use.setAttribute(k, v);
  svg.append(use);
}
```
